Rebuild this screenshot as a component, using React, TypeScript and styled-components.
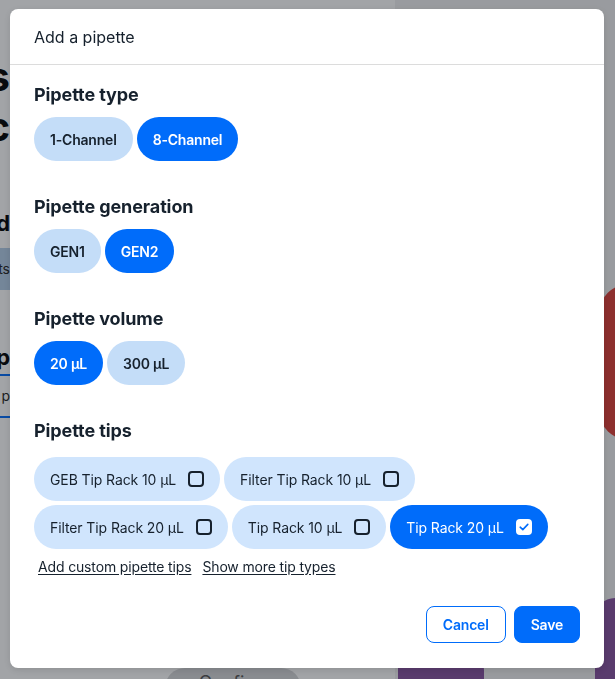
import * as React from 'react';
import styled, { createGlobalStyle } from 'styled-components';

const BLUE = '#006cfa';
const DARK = '#16212d';

const GlobalStyle = createGlobalStyle`
  html, body { margin: 0; padding: 0; }
  body {
    font-family: Inter, "Noto Sans", "Liberation Sans", sans-serif;
    color: ${DARK};
    background: #fff;
    overflow: hidden;
  }
  * { box-sizing: border-box; }
`;

interface Option {
  label: string
  selected?: boolean
}

const sections: { title: string, options: Option[] }[] = [
  { title: 'Pipette type', options: [{ label: '1-Channel' }, { label: '8-Channel', selected: true }] },
  { title: 'Pipette generation', options: [{ label: 'GEN1' }, { label: 'GEN2', selected: true }] },
  { title: 'Pipette volume', options: [{ label: '20 µL', selected: true }, { label: '300 µL' }] },
];

const tips: Option[] = [
  { label: 'GEB Tip Rack 10 µL' },
  { label: 'Filter Tip Rack 10 µL' },
  { label: 'Filter Tip Rack 20 µL' },
  { label: 'Tip Rack 10 µL' },
  { label: 'Tip Rack 20 µL', selected: true },
];

export default function App() {
  return (
    <>
      <GlobalStyle />
      <Backdrop>
        <LeftPane>
          <Edge><BigTitle>Pipettes</BigTitle></Edge>
          <Edge><BigTitle>Protoc</BigTitle></Edge>
          <Edge style={{ marginTop: 56 }}><SubTitle>Pipette add</SubTitle></Edge>
          <EdgeBox><SmallText>Instruments</SmallText></EdgeBox>
          <Edge style={{ marginTop: 52 }}><SubTitle>Your p</SubTitle></Edge>
          <DashLine />
          <Edge><SmallText>Step p</SmallText></Edge>
          <DashLine />
          <Spacer />
          <ConfirmPill>Confirm</ConfirmPill>
        </LeftPane>
        <RightPane>
          <RedBlob />
          <PurpleBlob />
          <PurpleEdge />
        </RightPane>
      </Backdrop>
      <Overlay>
        <Modal>
          <Header>Add a pipette</Header>
          <Body>
            {sections.map((s, i) =>
              <Section key={`${s.title}_${i}`}>
                <Heading>{s.title}</Heading>
                <PillRow>
                  {s.options.map((o, j) =>
                    <RadioPill key={`${o.label}_${j}`} selected={!!o.selected}>{o.label}</RadioPill>
                  )}
                </PillRow>
              </Section>
            )}
            <Section>
              <Heading>Pipette tips</Heading>
              <TipGrid>
                {tips.map((t, i) =>
                  <TipPill key={`${t.label}_${i}`} selected={!!t.selected}>
                    {t.label}
                    <Check selected={!!t.selected}>
                      {t.selected &&
                        <svg width="10" height="8" viewBox="0 0 10 8">
                          <path d="M1.2 4.2 L3.8 6.6 L8.8 1.4" fill="none" stroke={BLUE} strokeWidth="1.6" strokeLinecap="round" strokeLinejoin="round" />
                        </svg>}
                    </Check>
                  </TipPill>
                )}
              </TipGrid>
              <Links>
                <LinkText>Add custom pipette tips</LinkText>
                <LinkText>Show more tip types</LinkText>
              </Links>
            </Section>
          </Body>
          <Footer>
            <SecondaryButton>Cancel</SecondaryButton>
            <PrimaryButton>Save</PrimaryButton>
          </Footer>
        </Modal>
      </Overlay>
    </>
  );
}

const Backdrop = styled.div`
  display: grid;
  grid-template-columns: 395px 1fr;
  height: 679px;
  overflow: hidden;
`;

const LeftPane = styled.div`
  display: flex;
  flex-direction: column;
  padding-top: 52px;
  background: #fff;
`;

const Edge = styled.div`
  width: 10px;
  display: flex;
  justify-content: flex-end;
  overflow: hidden;
  white-space: nowrap;
`;

const EdgeBox = styled(Edge)`
  width: 10px;
  height: 42px;
  margin-top: 10px;
  align-items: center;
  background: #b3cde8;
`;

const BigTitle = styled.span`
  font-size: 40px;
  font-weight: 700;
  line-height: 50px;
  color: #000;
`;

const SubTitle = styled.span`
  font-size: 22px;
  font-weight: 700;
  line-height: 30px;
  color: #000;
`;

const SmallText = styled.span`
  font-size: 14px;
  line-height: 36px;
  color: #222;
`;

const DashLine = styled.div`
  width: 10px;
  height: 2px;
  margin: 2px 0;
  background: ${BLUE};
`;

const Spacer = styled.div`
  flex: 1;
`;

const ConfirmPill = styled.div`
  align-self: flex-start;
  margin-left: 165px;
  margin-bottom: -30px;
  width: 136px;
  height: 41px;
  border-radius: 20px;
  background: #d6d7d9;
  color: #555;
  font-size: 18px;
  display: flex;
  justify-content: center;
  padding-top: 4px;
`;

const RightPane = styled.div`
  position: relative;
  background: #f1f1f2;
`;

const RedBlob = styled.div`
  position: absolute;
  left: 204px;
  top: 284px;
  width: 200px;
  height: 156px;
  border-radius: 30px 0 0 30px;
  background: #dc3d36;
`;

const PurpleBlob = styled.div`
  position: absolute;
  left: 3px;
  top: 640px;
  width: 86px;
  height: 60px;
  border-radius: 0 30px 0 0;
  background: #86509f;
`;

const PurpleEdge = styled.div`
  position: absolute;
  left: 200px;
  top: 598px;
  width: 60px;
  height: 90px;
  border-radius: 20px 0 0 0;
  background: #86509f;
`;

const Overlay = styled.div`
  position: fixed;
  inset: 0;
  background: rgba(22, 27, 36, 0.4);
  padding: 9px 11px 11px 10px;
`;

const Modal = styled.div`
  width: 594px;
  background: #fff;
  border-radius: 8px;
  display: flex;
  flex-direction: column;
  box-shadow: 0 2px 6px rgba(0, 0, 0, 0.12);
`;

const Header = styled.div`
  height: 56px;
  padding: 0 24px;
  display: flex;
  align-items: center;
  font-size: 16px;
  font-weight: 400;
  border-bottom: 1px solid #dcdcdc;
`;

const Body = styled.div`
  padding: 16px 24px 0;
  display: flex;
  flex-direction: column;
  gap: 32px;
`;

const Section = styled.div`
  display: flex;
  flex-direction: column;
`;

const Heading = styled.h3`
  margin: 2px 0 10px;
  font-size: 18px;
  line-height: 24px;
  font-weight: 700;
  letter-spacing: -0.1px;
`;

const PillRow = styled.div`
  display: flex;
  gap: 4px;
`;

const RadioPill = styled.div<{ selected: boolean }>`
  height: 44px;
  padding: 0 16px;
  border-radius: 22px;
  display: flex;
  align-items: center;
  font-size: 14px;
  font-weight: 600;
  letter-spacing: -0.2px;
  background: ${p => p.selected ? BLUE : '#c4ddf8'};
  color: ${p => p.selected ? '#fff' : DARK};
`;

const TipGrid = styled.div`
  display: flex;
  flex-wrap: wrap;
  gap: 4px;
  margin-top: 4px;
  max-width: 520px;
`;

const TipPill = styled.div<{ selected: boolean }>`
  height: 44px;
  padding: 0 16px;
  border-radius: 22px;
  display: flex;
  align-items: center;
  gap: 12px;
  font-size: 14px;
  font-weight: 400;
  letter-spacing: -0.1px;
  background: ${p => p.selected ? BLUE : '#d0e5fd'};
  color: ${p => p.selected ? '#fff' : DARK};
`;

const Check = styled.span<{ selected: boolean }>`
  width: 16px;
  height: 16px;
  border-radius: 4px;
  display: flex;
  align-items: center;
  justify-content: center;
  border: ${p => p.selected ? 'none' : `2px solid ${DARK}`};
  background: ${p => p.selected ? '#fff' : 'transparent'};
`;

const Links = styled.div`
  display: flex;
  gap: 11px;
  padding: 8px 4px 0;
`;

const LinkText = styled.span`
  font-size: 14px;
  line-height: 20px;
  letter-spacing: -0.15px;
  text-decoration: underline;
  text-underline-offset: 2px;
  color: ${DARK};
`;

const Footer = styled.div`
  display: flex;
  justify-content: flex-end;
  gap: 8px;
  padding: 29px 24px 25px;
`;

const SecondaryButton = styled.div`
  height: 37px;
  padding: 0 16px;
  border-radius: 8px;
  border: 1px solid ${BLUE};
  color: ${BLUE};
  font-size: 14px;
  font-weight: 600;
  letter-spacing: -0.2px;
  display: flex;
  align-items: center;
`;

const PrimaryButton = styled(SecondaryButton)`
  background: ${BLUE};
  color: #fff;
`;
